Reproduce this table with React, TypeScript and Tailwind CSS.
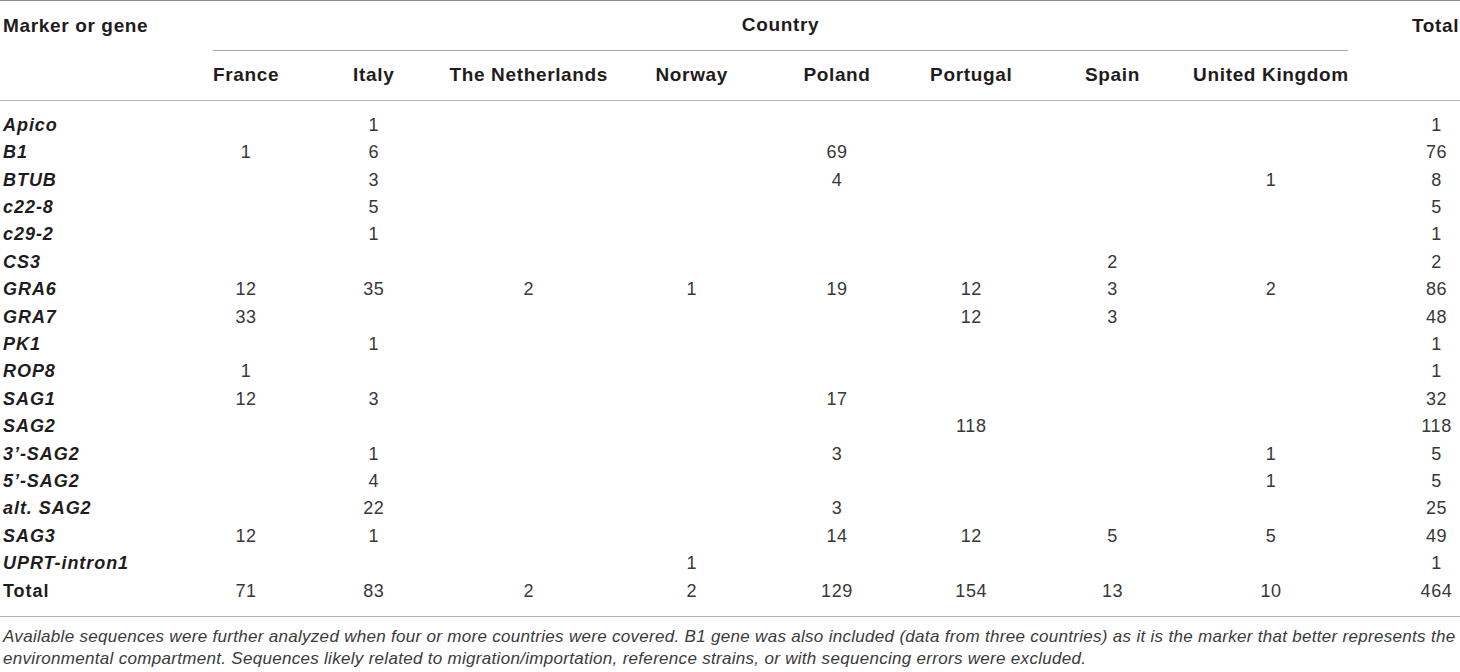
import React from "react";

const countries = [
  "France",
  "Italy",
  "The Netherlands",
  "Norway",
  "Poland",
  "Portugal",
  "Spain",
  "United Kingdom",
];

type Row = { name: string; values: (number | null)[]; total: number };

const rows: Row[] = [
  { name: "Apico", values: [null, 1, null, null, null, null, null, null], total: 1 },
  { name: "B1", values: [1, 6, null, null, 69, null, null, null], total: 76 },
  { name: "BTUB", values: [null, 3, null, null, 4, null, null, 1], total: 8 },
  { name: "c22-8", values: [null, 5, null, null, null, null, null, null], total: 5 },
  { name: "c29-2", values: [null, 1, null, null, null, null, null, null], total: 1 },
  { name: "CS3", values: [null, null, null, null, null, null, 2, null], total: 2 },
  { name: "GRA6", values: [12, 35, 2, 1, 19, 12, 3, 2], total: 86 },
  { name: "GRA7", values: [33, null, null, null, null, 12, 3, null], total: 48 },
  { name: "PK1", values: [null, 1, null, null, null, null, null, null], total: 1 },
  { name: "ROP8", values: [1, null, null, null, null, null, null, null], total: 1 },
  { name: "SAG1", values: [12, 3, null, null, 17, null, null, null], total: 32 },
  { name: "SAG2", values: [null, null, null, null, null, 118, null, null], total: 118 },
  { name: "3’-SAG2", values: [null, 1, null, null, 3, null, null, 1], total: 5 },
  { name: "5’-SAG2", values: [null, 4, null, null, null, null, null, 1], total: 5 },
  { name: "alt. SAG2", values: [null, 22, null, null, 3, null, null, null], total: 25 },
  { name: "SAG3", values: [12, 1, null, null, 14, 12, 5, 5], total: 49 },
  { name: "UPRT-intron1", values: [null, null, null, 1, null, null, null, null], total: 1 },
];

const totals = [71, 83, 2, 2, 129, 154, 13, 10];

// column widths picked so each column's centre sits where the reference has it
const grid =
  "grid grid-cols-[188px_116px_139.5px_170.5px_155.5px_135px_133.5px_149px_168px_105px]";

export default function App() {
  return (
    <div className="w-[1460px] h-[672px] overflow-hidden bg-white font-['Liberation_Sans',Arial,sans-serif] text-[18px] text-[#1f1c1d] tracking-[0.6px]">
      <div className="border-t border-[#8c8c8c] text-[19px] tracking-[0.65px]">
        <div className={`${grid} h-[50px] items-center font-bold`}>
          <div className="pl-[3px]">Marker or gene</div>
          <div className="col-span-8 self-stretch ml-[25px] mr-[7px] flex items-center justify-center border-b border-[#a9a9a9]">
            Country
          </div>
          <div className="pl-[56px] text-center">Total</div>
        </div>
        <div className={`${grid} h-[50px] items-center font-bold border-b border-[#b8b8b8]`}>
          <div />
          {countries.map((c) => (
            <div key={c} className="text-center">
              {c}
            </div>
          ))}
          <div />
        </div>
      </div>

      <div className="pt-[10.6px] pb-[10.8px] border-b border-[#b0b0b0] text-[#383838]">
        {rows.map((r) => (
          <div key={r.name} className={`${grid} h-[27.42px] items-center`}>
            <div className="pl-[3px] font-bold italic tracking-[0.95px] text-[#1f1c1d]">{r.name}</div>
            {r.values.map((v, i) => (
              <div key={i} className="text-center">
                {v ?? ""}
              </div>
            ))}
            <div className="pl-[58px] text-center">{r.total}</div>
          </div>
        ))}
        <div className={`${grid} h-[27.42px] items-center`}>
          <div className="pl-[3px] font-bold tracking-[0.95px] text-[#1f1c1d]">Total</div>
          {totals.map((v, i) => (
            <div key={i} className="text-center">
              {v}
            </div>
          ))}
          <div className="pl-[58px] text-center">464</div>
        </div>
      </div>

      <p className="pt-[9px] pl-[3px] pr-[2px] italic text-[17px] leading-[22px] tracking-[0.3px] text-[#3a3a3a]">
        Available sequences were further analyzed when four or more countries were covered. B1 gene was also
        included (data from three countries) as it is the marker that better represents the environmental
        compartment. Sequences likely related to migration/importation, reference strains, or with sequencing
        errors were excluded.
      </p>
    </div>
  );
}
